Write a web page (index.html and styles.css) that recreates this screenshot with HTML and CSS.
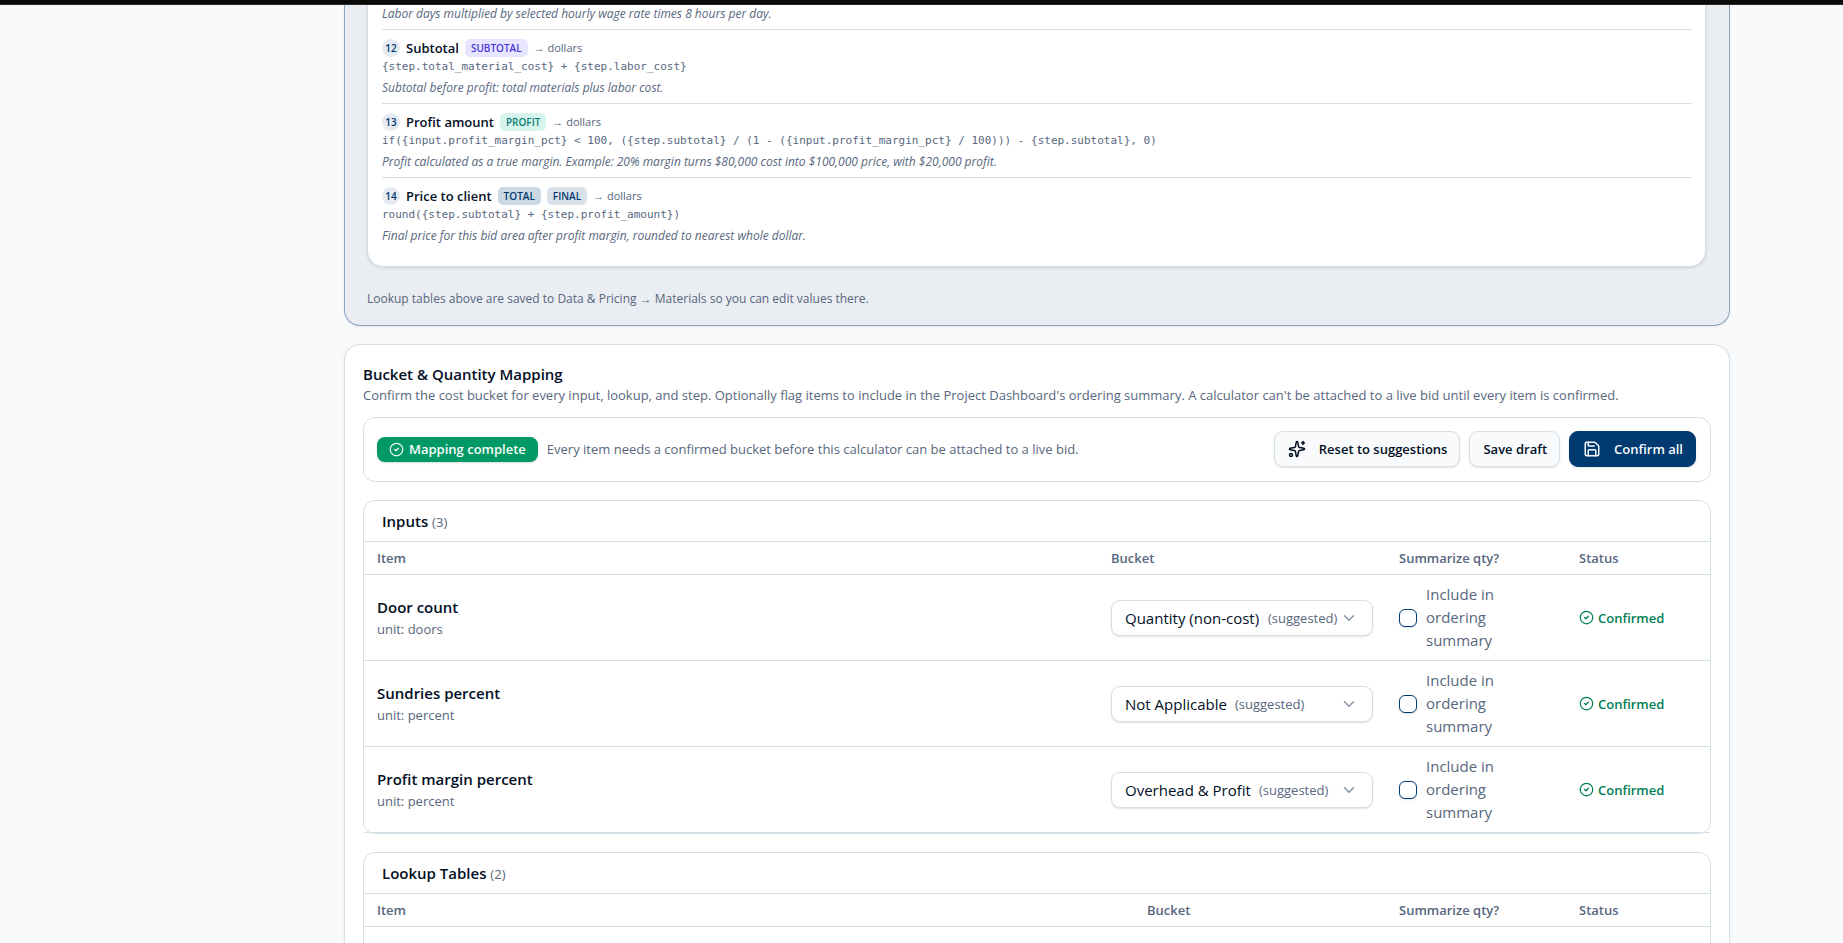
FILE: index.html
```html
<!DOCTYPE html>
<html lang="en">
<head>
<meta charset="utf-8">
<meta name="viewport" content="width=device-width, initial-scale=1">
<title>Calculator – Bucket &amp; Quantity Mapping</title>
<link rel="stylesheet" href="styles.css">
</head>
<body>
<svg class="sprite" aria-hidden="true">
  <symbol id="icon-check" viewBox="0 0 24 24"><circle cx="12" cy="12" r="10"/><path d="m9 12 2 2 4-4"/></symbol>
  <symbol id="icon-chevron" viewBox="0 0 24 24"><path d="m6 9 6 6 6-6"/></symbol>
  <symbol id="icon-sparkles" viewBox="0 0 24 24"><path d="M11.017 2.814a1 1 0 0 1 1.966 0l1.051 5.558a2 2 0 0 0 1.594 1.594l5.558 1.051a1 1 0 0 1 0 1.966l-5.558 1.051a2 2 0 0 0-1.594 1.594l-1.051 5.558a1 1 0 0 1-1.966 0l-1.051-5.558a2 2 0 0 0-1.594-1.594l-5.558-1.051a1 1 0 0 1 0-1.966l5.558-1.051a2 2 0 0 0 1.594-1.594z"/><path d="M20 2v4"/><path d="M22 4h-4"/><circle cx="4" cy="20" r="2"/></symbol>
  <symbol id="icon-save" viewBox="0 0 24 24"><path d="M15.2 3a2 2 0 0 1 1.4.6l3.8 3.8a2 2 0 0 1 .6 1.4V19a2 2 0 0 1-2 2H5a2 2 0 0 1-2-2V5a2 2 0 0 1 2-2z"/><path d="M17 21v-7a1 1 0 0 0-1-1H8a1 1 0 0 0-1 1v7"/><path d="M7 3v4a1 1 0 0 0 1 1h7"/></symbol>
</svg>
<div class="topbar"></div>
<main class="page">
  <section class="preview">
    <ol class="steps">
      <li class="step step-clipped">
        <p class="step-note">Labor days multiplied by selected hourly wage rate times 8 hours per day.</p>
      </li>
      <li class="step">
        <div class="step-head"><span class="step-num">12</span><h3 class="step-name">Subtotal</h3><span class="tag tag-subtotal">SUBTOTAL</span><span class="step-unit">→ dollars</span></div>
        <code class="step-code">{step.total_material_cost} + {step.labor_cost}</code>
        <p class="step-note">Subtotal before profit: total materials plus labor cost.</p>
      </li>
      <li class="step">
        <div class="step-head"><span class="step-num">13</span><h3 class="step-name">Profit amount</h3><span class="tag tag-profit">PROFIT</span><span class="step-unit">→ dollars</span></div>
        <code class="step-code">if({input.profit_margin_pct} &lt; 100, ({step.subtotal} / (1 - ({input.profit_margin_pct} / 100))) - {step.subtotal}, 0)</code>
        <p class="step-note">Profit calculated as a true margin. Example: 20% margin turns $80,000 cost into $100,000 price, with $20,000 profit.</p>
      </li>
      <li class="step">
        <div class="step-head"><span class="step-num">14</span><h3 class="step-name">Price to client</h3><span class="tag tag-total">TOTAL</span><span class="tag tag-final">FINAL</span><span class="step-unit">→ dollars</span></div>
        <code class="step-code">round({step.subtotal} + {step.profit_amount})</code>
        <p class="step-note">Final price for this bid area after profit margin, rounded to nearest whole dollar.</p>
      </li>
    </ol>
    <p class="preview-note">Lookup tables above are saved to Data &amp; Pricing → Materials so you can edit values there.</p>
  </section>

  <section class="mapping">
    <h2 class="mapping-title">Bucket &amp; Quantity Mapping</h2>
    <p class="mapping-text">Confirm the cost bucket for every input, lookup, and step. Optionally flag items to include in the Project Dashboard's ordering summary. A calculator can't be attached to a live bid until every item is confirmed.</p>

    <div class="toolbar">
      <span class="pill"><svg class="icon icon-md"><use href="#icon-check"/></svg>Mapping complete</span>
      <p class="toolbar-text">Every item needs a confirmed bucket before this calculator can be attached to a live bid.</p>
      <div class="actions">
        <button class="btn" type="button"><svg class="icon"><use href="#icon-sparkles"/></svg>Reset to suggestions</button>
        <button class="btn" type="button">Save draft</button>
        <button class="btn btn-primary" type="button"><svg class="icon"><use href="#icon-save"/></svg>Confirm all</button>
      </div>
    </div>

    <section class="group">
      <h3 class="group-title">Inputs <span class="count">(3)</span></h3>
      <table class="grid">
        <colgroup><col><col class="col-bucket"><col class="col-qty"><col class="col-status"></colgroup>
        <thead><tr><th scope="col">Item</th><th scope="col">Bucket</th><th scope="col">Summarize qty?</th><th scope="col">Status</th></tr></thead>
        <tbody>
          <tr>
            <td><div class="item-name">Door count</div><div class="item-unit">unit: doors</div></td>
            <td><div class="picker"><select class="picker-select" aria-label="Bucket for Door count"><option>Quantity (non-cost)</option></select><span class="hint">(suggested)</span><svg class="icon chevron"><use href="#icon-chevron"/></svg></div></td>
            <td><label class="check"><input class="check-box" type="checkbox"><span>Include in ordering summary</span></label></td>
            <td><span class="status"><svg class="icon icon-md"><use href="#icon-check"/></svg>Confirmed</span></td>
          </tr>
          <tr>
            <td><div class="item-name">Sundries percent</div><div class="item-unit">unit: percent</div></td>
            <td><div class="picker"><select class="picker-select" aria-label="Bucket for Sundries percent"><option>Not Applicable</option></select><span class="hint">(suggested)</span><svg class="icon chevron"><use href="#icon-chevron"/></svg></div></td>
            <td><label class="check"><input class="check-box" type="checkbox"><span>Include in ordering summary</span></label></td>
            <td><span class="status"><svg class="icon icon-md"><use href="#icon-check"/></svg>Confirmed</span></td>
          </tr>
          <tr>
            <td><div class="item-name">Profit margin percent</div><div class="item-unit">unit: percent</div></td>
            <td><div class="picker"><select class="picker-select" aria-label="Bucket for Profit margin percent"><option>Overhead &amp; Profit</option></select><span class="hint">(suggested)</span><svg class="icon chevron"><use href="#icon-chevron"/></svg></div></td>
            <td><label class="check"><input class="check-box" type="checkbox"><span>Include in ordering summary</span></label></td>
            <td><span class="status"><svg class="icon icon-md"><use href="#icon-check"/></svg>Confirmed</span></td>
          </tr>
        </tbody>
      </table>
    </section>

    <section class="group">
      <h3 class="group-title">Lookup Tables <span class="count">(2)</span></h3>
      <table class="grid">
        <colgroup><col><col class="col-bucket-narrow"><col class="col-qty"><col class="col-status"></colgroup>
        <thead><tr><th scope="col">Item</th><th scope="col">Bucket</th><th scope="col">Summarize qty?</th><th scope="col">Status</th></tr></thead>
        <tbody><tr class="row-empty"><td></td><td></td><td></td><td></td></tr></tbody>
      </table>
    </section>
  </section>
</main>
</body>
</html>
```
FILE: styles.css
```css
:root {
  --ink: #020f24;
  --muted: #57677e;
  --line: #d5dfe6;
  --navy: #003a70;
  --green: #008055;
}

* {
  box-sizing: border-box;
}

html {
  height: 100%;
  overflow: hidden;
}

body {
  margin: 0;
  height: 100%;
  overflow: hidden;
  background: #f9fafc;
  color: var(--ink);
  font: 14px/20px "Open Sans", "Noto Sans", sans-serif;
}

h2, h3, p, ol {
  margin: 0;
  padding: 0;
}

.sprite {
  display: none;
}

.topbar {
  height: 5px;
  background: #0a0a0a;
  border-bottom: 1px solid #2a2a2a;
}

.icon {
  flex: none;
  width: 18px;
  height: 18px;
  fill: none;
  stroke: currentColor;
  stroke-width: 2;
  stroke-linecap: round;
  stroke-linejoin: round;
}

.icon-md {
  width: 15px;
  height: 15px;
}

.page {
  display: flex;
  flex-direction: column;
  gap: 18px;
  padding: 0 113px 0 344px;
}

/* Calculation preview */

.preview {
  padding: 0 23px 17px 22px;
  border: 1px solid #8aa5c0;
  border-top: 0;
  border-radius: 0 0 16px 16px;
  background: #eaedf2;
  box-shadow: 0 1px 2px rgba(2, 15, 36, 0.08);
}

.steps {
  list-style: none;
  padding: 0 13px 15px 14px;
  border: 1px solid var(--line);
  border-top: 0;
  border-radius: 0 0 16px 16px;
  background: #fff;
  box-shadow: 0 1px 3px rgba(2, 15, 36, 0.12);
}

.step {
  padding: 9px 0 6px;
  border-bottom: 1px solid var(--line);
}

.step:last-child {
  border-bottom: 0;
}

.step-clipped {
  padding-top: 0;
}

.step-head {
  display: flex;
  align-items: center;
  gap: 6px;
  height: 18px;
  margin-bottom: 1px;
}

.step-num {
  width: 18px;
  border-radius: 9px;
  background: #e6ebf1;
  color: var(--navy);
  font-size: 10px;
  font-weight: 600;
  line-height: 18px;
  text-align: center;
}

.step-name {
  font-size: 13px;
  font-weight: 600;
  line-height: 20px;
}

.tag {
  padding: 0 6px;
  border-radius: 5px;
  font-size: 10px;
  font-weight: 600;
  line-height: 18px;
}

.tag-subtotal { background: #e7e5ff; color: #4a35d8; }
.tag-profit { background: #d8f4ef; color: #087f72; }
.tag-total { background: #ccd8e3; color: var(--navy); }
.tag-final { background: #d9e1ea; color: var(--navy); }

.step-unit {
  color: var(--muted);
  font-size: 11px;
  line-height: 18px;
}

.step-code {
  display: block;
  margin-bottom: 3px;
  color: var(--muted);
  font: 11px/18px "DejaVu Sans Mono", monospace;
}

.step-note {
  color: var(--muted);
  font-size: 12px;
  font-style: italic;
  line-height: 18px;
}

.preview-note {
  margin-top: 23px;
  color: var(--muted);
  font-size: 12px;
  line-height: 18px;
}

/* Bucket mapping */

.mapping {
  padding: 18px;
  border: 1px solid var(--line);
  border-radius: 16px;
  background: #fff;
  box-shadow: 0 1px 3px rgba(2, 15, 36, 0.1);
}

.mapping-title {
  font-size: 15px;
  font-weight: 600;
  line-height: 22px;
}

.mapping-text {
  color: var(--muted);
  font-size: 13px;
  line-height: 20px;
}

.toolbar {
  display: flex;
  align-items: center;
  gap: 9px;
  margin: 12px 0 18px;
  padding: 13px 14px 14px 13px;
  border: 1px solid var(--line);
  border-radius: 12px;
}

.pill {
  display: flex;
  align-items: center;
  gap: 5px;
  padding: 0 12px;
  border-radius: 8px;
  background: #009966;
  color: #f6fbf9;
  font-size: 13px;
  font-weight: 600;
  line-height: 25px;
  white-space: nowrap;
  box-shadow: 0 1px 2px rgba(2, 15, 36, 0.15);
}

.toolbar-text {
  color: var(--muted);
  font-size: 13px;
}

.actions {
  display: flex;
  gap: 9px;
  margin-left: auto;
}

.btn {
  display: flex;
  align-items: center;
  gap: 13px;
  height: 36px;
  padding: 0 12px 0 13px;
  border: 1px solid var(--line);
  border-radius: 9px;
  background: #f9fafc;
  color: var(--ink);
  font: 600 13px/20px "Open Sans", "Noto Sans", sans-serif;
  white-space: nowrap;
  box-shadow: 0 1px 2px rgba(2, 15, 36, 0.12);
}

.btn-primary {
  border-color: var(--navy);
  background: var(--navy);
  color: #f9fafc;
}

.group {
  border: 1px solid var(--line);
  border-radius: 12px;
}

.group + .group {
  margin-top: 18px;
}

.group-title {
  padding: 10px 18px;
  font-size: 15px;
  font-weight: 600;
  line-height: 20px;
}

.count {
  color: var(--muted);
  font-size: 13px;
  font-weight: 400;
  line-height: 1;
}

.grid {
  width: 100%;
  border-collapse: separate;
  border-spacing: 0;
  table-layout: fixed;
}

.col-bucket { width: 288px; }
.col-bucket-narrow { width: 252px; }
.col-qty { width: 180px; }
.col-status { width: 144px; }

.grid th {
  padding: 6px 13px;
  border-top: 1px solid var(--line);
  border-bottom: 1px solid var(--line);
  color: var(--muted);
  font-size: 13px;
  font-weight: 600;
  line-height: 20px;
  text-align: left;
}

.grid td {
  padding: 8px 13px;
  border-bottom: 1px solid var(--line);
  vertical-align: middle;
}

.row-empty td {
  height: 86px;
}

.item-name {
  font-size: 15px;
  font-weight: 600;
  line-height: 23px;
}

.item-unit {
  color: var(--muted);
  font-size: 13px;
  line-height: 20px;
}

.picker {
  display: flex;
  align-items: center;
  height: 36px;
  padding: 0 14px 0 13px;
  border: 1px solid var(--line);
  border-radius: 9px;
  background: #fff;
  box-shadow: 0 1px 2px rgba(2, 15, 36, 0.12);
}

.picker-select {
  appearance: none;
  flex: none;
  margin: 0 8px 0 0;
  padding: 0;
  border: 0;
  background: transparent;
  color: var(--ink);
  font: 15px/22px "Open Sans", "Noto Sans", sans-serif;
}

.hint {
  color: var(--muted);
  font-size: 13px;
}

.chevron {
  margin-left: auto;
  color: #8793a2;
}

.check {
  display: flex;
  align-items: center;
  gap: 9px;
  color: var(--muted);
  font-size: 15px;
  line-height: 23px;
}

.check span {
  max-width: 90px;
}

.check-box {
  appearance: none;
  flex: none;
  width: 18px;
  height: 18px;
  margin: 0;
  border: 1px solid var(--navy);
  border-radius: 6px;
  background: #fff;
  box-shadow: 0 1px 2px rgba(2, 15, 36, 0.12);
}

.status {
  display: flex;
  align-items: center;
  gap: 4px;
  color: var(--green);
  font-size: 13px;
  font-weight: 600;
}
```
